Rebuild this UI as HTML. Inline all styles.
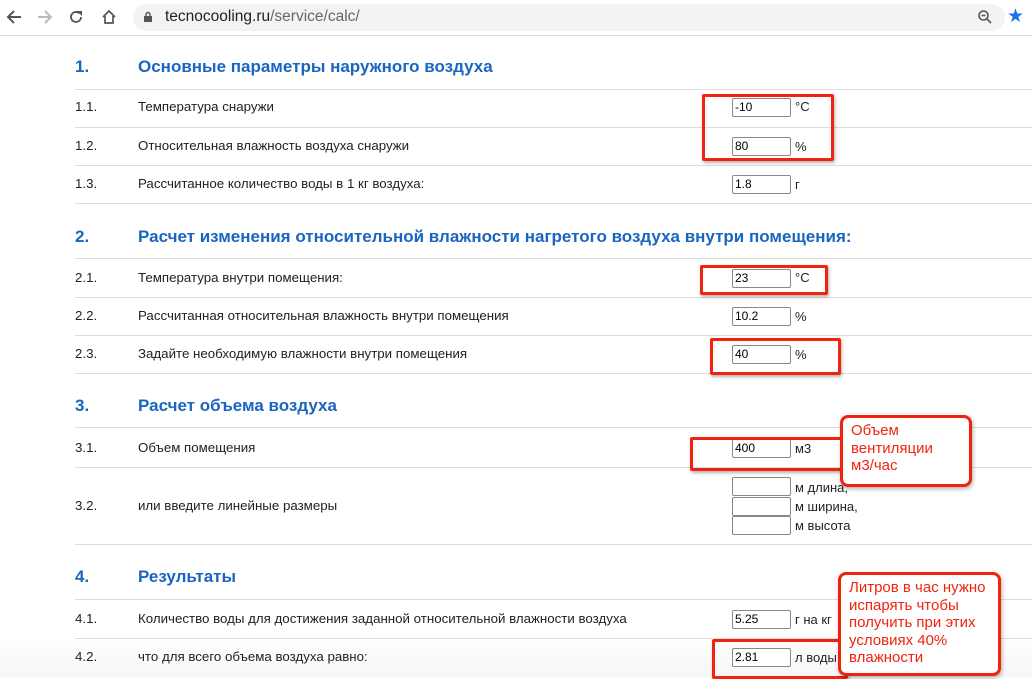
<!DOCTYPE html>
<html><head><meta charset="utf-8"><style>
body{margin:0;width:1032px;height:677px;overflow:hidden;background:#fff;font-family:"Liberation Sans",Arial,sans-serif;position:relative}
.a{position:absolute}
.bar{left:0;top:0;width:1032px;height:35px;background:#fff;border-bottom:1px solid #ddd}
.pill{left:133px;top:4px;width:872px;height:27px;border-radius:14px;background:#f1f3f4}
.h{color:#1a65c0;font-weight:bold;font-size:17px}
.t{font-size:13.3px;color:#222}
.ln{left:75px;width:957px;height:1px;background:#ddd}
.in{left:732px;width:55px;height:17px;border:1px solid #888;border-radius:2px;font-size:12px;line-height:17px;padding-left:2px;box-sizing:content-box;background:#fff}
.u{left:795px;font-size:13px;color:#222}
.rb{border:3px solid #f0230f;border-radius:2px;box-shadow:1px 2px 3px rgba(0,0,0,.3)}
.co{border:3px solid #f0230f;border-radius:8px;background:#fff;color:#f0230f;font-size:15px;line-height:17.5px;padding:4px 8px;box-sizing:border-box;box-shadow:1px 2px 4px rgba(0,0,0,.3)}
</style></head><body>
<div class="a bar"></div>
<svg class="a" style="left:5px;top:9px" width="18" height="16" viewBox="0 0 18 16"><path d="M16 8H3M9 2L3 8l6 6" fill="none" stroke="#555" stroke-width="2"/></svg>
<svg class="a" style="left:36px;top:9px" width="18" height="16" viewBox="0 0 18 16"><path d="M2 8h13M9 2l6 6-6 6" fill="none" stroke="#bbb" stroke-width="2"/></svg>
<svg class="a" style="left:68px;top:9px" width="16" height="16" viewBox="0 0 16 16"><path d="M13 8a5 5 0 1 1-1.5-3.6" fill="none" stroke="#555" stroke-width="1.8"/><path d="M9 2h5v5z" fill="#555"/></svg>
<svg class="a" style="left:100px;top:8px" width="18" height="18" viewBox="0 0 18 18"><path d="M3 9L9 3l6 6M5 8v7h8V8" fill="none" stroke="#555" stroke-width="1.7"/></svg>
<div class="a pill"></div>
<svg class="a" style="left:143px;top:11px" width="10" height="12" viewBox="0 0 10 12"><rect x="1" y="5" width="8" height="6" fill="#555"/><path d="M3 5V3.5a2 2 0 0 1 4 0V5" fill="none" stroke="#555" stroke-width="1.4"/></svg>
<div class="a" style="left:165px;top:8px;font-size:15.5px;color:#222">tecnocooling.ru<span style="color:#666">/service/calc/</span></div>
<svg class="a" style="left:977px;top:9px" width="16" height="16" viewBox="0 0 16 16"><circle cx="6.5" cy="6.5" r="4.5" fill="none" stroke="#555" stroke-width="1.6"/><path d="M10 10l4 4M4.5 6.5h4" stroke="#555" stroke-width="1.6"/></svg>
<div class="a" style="left:1007px;top:5px;font-size:19px;color:#1a73e8">&#9733;</div>

<div class="a h" style="left:75px;top:57px">1.</div><div class="a h" style="left:138px;top:57px">Основные параметры наружного воздуха</div>
<div class="a ln" style="top:89px"></div>
<div class="a t" style="left:75px;top:99px">1.1.</div><div class="a t" style="left:138px;top:99px">Температура снаружи</div>
<div class="a in" style="top:98px">-10</div><div class="a u" style="top:99px">°C</div>
<div class="a ln" style="top:127px"></div>
<div class="a t" style="left:75px;top:138px">1.2.</div><div class="a t" style="left:138px;top:138px">Относительная влажность воздуха снаружи</div>
<div class="a in" style="top:137px">80</div><div class="a u" style="top:139px">%</div>
<div class="a ln" style="top:165px"></div>
<div class="a t" style="left:75px;top:176px">1.3.</div><div class="a t" style="left:138px;top:176px">Рассчитанное количество воды в 1 кг воздуха:</div>
<div class="a in" style="top:175px">1.8</div><div class="a u" style="top:177px">г</div>
<div class="a ln" style="top:203px"></div>

<div class="a h" style="left:75px;top:227px">2.</div><div class="a h" style="left:138px;top:227px">Расчет изменения относительной влажности нагретого воздуха внутри помещения:</div>
<div class="a ln" style="top:258px"></div>
<div class="a t" style="left:75px;top:270px">2.1.</div><div class="a t" style="left:138px;top:270px">Температура внутри помещения:</div>
<div class="a in" style="top:269px">23</div><div class="a u" style="top:270px">°C</div>
<div class="a ln" style="top:297px"></div>
<div class="a t" style="left:75px;top:308px">2.2.</div><div class="a t" style="left:138px;top:308px">Рассчитанная относительная влажность внутри помещения</div>
<div class="a in" style="top:307px">10.2</div><div class="a u" style="top:309px">%</div>
<div class="a ln" style="top:335px"></div>
<div class="a t" style="left:75px;top:346px">2.3.</div><div class="a t" style="left:138px;top:346px">Задайте необходимую влажности внутри помещения</div>
<div class="a in" style="top:345px">40</div><div class="a u" style="top:347px">%</div>
<div class="a ln" style="top:373px"></div>

<div class="a h" style="left:75px;top:396px">3.</div><div class="a h" style="left:138px;top:396px">Расчет объема воздуха</div>
<div class="a ln" style="top:427px"></div>
<div class="a t" style="left:75px;top:440px">3.1.</div><div class="a t" style="left:138px;top:440px">Объем помещения</div>
<div class="a in" style="top:439px">400</div><div class="a u" style="top:441px">м3</div>
<div class="a ln" style="top:467px"></div>
<div class="a t" style="left:75px;top:498px">3.2.</div><div class="a t" style="left:138px;top:498px">или введите линейные размеры</div>
<div class="a in" style="top:477px"></div><div class="a u" style="top:480px">м длина,</div>
<div class="a in" style="top:497px"></div><div class="a u" style="top:499px">м ширина,</div>
<div class="a in" style="top:516px"></div><div class="a u" style="top:518px">м высота</div>
<div class="a ln" style="top:544px"></div>

<div class="a h" style="left:75px;top:567px">4.</div><div class="a h" style="left:138px;top:567px">Результаты</div>
<div class="a ln" style="top:599px"></div>
<div class="a t" style="left:75px;top:611px">4.1.</div><div class="a t" style="left:138px;top:611px">Количество воды для достижения заданной относительной влажности воздуха</div>
<div class="a in" style="top:610px">5.25</div><div class="a u" style="top:612px">г на кг</div>
<div class="a ln" style="top:638px"></div>
<div class="a" style="left:0;top:639px;width:1032px;height:38px;background:linear-gradient(#fff,#f6f6f6)"></div>
<div class="a t" style="left:75px;top:649px">4.2.</div><div class="a t" style="left:138px;top:649px">что для всего объема воздуха равно:</div>
<div class="a in" style="top:648px">2.81</div><div class="a u" style="top:650px">л воды</div>

<div class="a rb" style="left:702px;top:94px;width:126px;height:61px"></div>
<div class="a rb" style="left:700px;top:265px;width:122px;height:24px"></div>
<div class="a rb" style="left:710px;top:338px;width:125px;height:31px"></div>
<div class="a rb" style="left:690px;top:437px;width:160px;height:28px"></div>
<div class="a rb" style="left:712px;top:639px;width:130px;height:34px"></div>
<div class="a co" style="left:840px;top:415px;width:132px;height:72px">Объем<br>вентиляции<br>м3/час</div>
<div class="a co" style="left:838px;top:572px;width:163px;height:104px">Литров в час нужно испарять чтобы получить при этих условиях 40% влажности</div>
</body></html>
